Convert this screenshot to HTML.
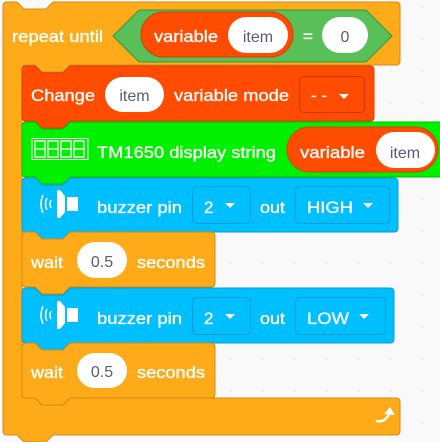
<!DOCTYPE html>
<html><head><style>
html,body{margin:0;padding:0;background:#F9F9F9;width:440px;height:442px;overflow:hidden}
svg text{font-family:"Liberation Sans",sans-serif;font-size:17px;font-weight:normal}
.w{fill:#fff;stroke:#fff;stroke-width:0.35}.g{fill:#575E75;font-size:16px}
</style></head><body>
<svg width="440" height="442" viewBox="0 0 440 442" xmlns="http://www.w3.org/2000/svg">
<defs>
<pattern id="dots" width="32" height="32" patternUnits="userSpaceOnUse" x="6" y="6"><circle cx="1" cy="1" r="0.7" fill="#ddd"/></pattern>
</defs>
<rect width="440" height="442" fill="#F9F9F9"/>
<rect width="440" height="442" fill="url(#dots)"/>
<!-- repeat C -->
<path d="M3,6 Q3,2 7,2 H17 l7,7 H46 l7,-7 H396 Q400,2 400,6 V61 Q400,65 396,65 H70 l-7,7 H42 l-7,-7 H26 Q22,65 22,69 V394 Q22,398 26,398 H35 l7,7 H63 l7,-7 H396 Q400,398 400,402 V431 Q400,435 396,435 H53 l-7,7 H24 l-7,-7 H7 Q3,435 3,431 Z" fill="#FFAB19" stroke="#CF8B17" stroke-width="1"/>
<text class="w" x="12" y="42" textLength="91" lengthAdjust="spacingAndGlyphs">repeat until</text>
<polygon points="113,36 139,10 366,10 392,36 366,62 139,62" fill="#59C059" stroke="#389438"/>
<rect x="141" y="12" width="152" height="45" rx="22.5" fill="#FF4C00" stroke="#DB3D00"/>
<text class="w" x="154" y="42" textLength="64" lengthAdjust="spacingAndGlyphs">variable</text>
<rect x="228" y="17" width="60" height="36" rx="18" fill="#fff"/>
<text class="g" x="258" y="42" text-anchor="middle">item</text>
<text class="w" x="303" y="42">=</text>
<rect x="322" y="17" width="46" height="36" rx="18" fill="#fff"/>
<text class="g" x="345" y="42" text-anchor="middle">0</text>
<path d="M376,421 q9,2 13,-7" fill="none" stroke="#fff" stroke-width="2.5"/><polygon points="384,414 390,407 395,415" fill="#fff"/>

<!-- Change -->
<path d="M22,70 Q22,66 26,66 H35 l7,7 H63 l7,-7 H370 Q374,66 374,70 V117 Q374,121 370,121 H70 l-7,7 H42 l-7,-7 H26 Q22,121 22,117 Z" fill="#FF4C00" stroke="#DB3D00"/>
<text class="w" x="31" y="101" textLength="64" lengthAdjust="spacingAndGlyphs">Change</text>
<rect x="105" y="77" width="59" height="35" rx="17.5" fill="#fff"/>
<text class="g" x="134.5" y="101" text-anchor="middle">item</text>
<text class="w" x="174" y="101" textLength="115" lengthAdjust="spacingAndGlyphs">variable mode</text>
<rect x="299.5" y="76.5" width="65" height="36" rx="4" fill="#FF4C00" stroke="#C53900"/>
<text class="w" x="311" y="101">- -</text>
<polygon points="339,94 349,94 344,99" fill="#fff"/>

<!-- Green -->
<path d="M22,126 Q22,122 26,122 H35 l7,7 H63 l7,-7 H460 V177 H70 l-7,7 H42 l-7,-7 H26 Q22,177 22,173 Z" fill="#00F000" stroke="#00C000"/>
<rect x="32" y="138.5" width="56" height="21" fill="none" stroke="#fff" stroke-width="1"/>
<g fill="none" stroke="#fff" stroke-width="1.3">
<rect x="35" y="141" width="10" height="16"/><line x1="35" y1="149" x2="45" y2="149"/>
<rect x="48" y="141" width="10" height="16"/><line x1="48" y1="149" x2="58" y2="149"/>
<rect x="61" y="141" width="10" height="16"/><line x1="61" y1="149" x2="71" y2="149"/>
<rect x="74" y="141" width="10" height="16"/><line x1="74" y1="149" x2="84" y2="149"/>
</g>
<text class="w" x="97" y="158" textLength="179" lengthAdjust="spacingAndGlyphs">TM1650 display string</text>
<rect x="287" y="127" width="151" height="45" rx="22.5" fill="#FF4C00" stroke="#DB3D00"/>
<text class="w" x="300" y="158" textLength="65" lengthAdjust="spacingAndGlyphs">variable</text>
<rect x="376" y="132" width="59" height="36" rx="18" fill="#fff"/>
<text class="g" x="405" y="158" text-anchor="middle">item</text>

<!-- Buzzer 1 -->
<path d="M22,182 Q22,178 26,178 H35 l7,7 H63 l7,-7 H394 Q398,178 398,182 V228 Q398,232 394,232 H70 l-7,7 H42 l-7,-7 H26 Q22,232 22,228 Z" fill="#00BFFF" stroke="#0A9ECF"/>
<g id="spk">
<path d="M57,190 L60,190 L65,196 L65,212 L60,218 L57,218 Z" fill="#fff"/>
<rect x="67" y="197" width="11" height="14" fill="#fff"/>
<path d="M43,195 q-4,9 0,18" fill="none" stroke="#fff" stroke-width="1.5"/>
<path d="M47,198 q-3,6 0,12" fill="none" stroke="#fff" stroke-width="1.5"/>
<path d="M51,200 q-2,4 0,8" fill="none" stroke="#fff" stroke-width="1.5"/>
</g>
<text class="w" x="97" y="213" textLength="85" lengthAdjust="spacingAndGlyphs">buzzer pin</text>
<rect x="192.5" y="186.5" width="58" height="37" rx="4" fill="#00BFFF" stroke="#0A9ECF"/>
<text class="w" x="204" y="213">2</text>
<polygon points="225,203 235,203 230,208" fill="#fff"/>
<text class="w" x="260" y="213" textLength="25" lengthAdjust="spacingAndGlyphs">out</text>
<rect x="295.5" y="186.5" width="94" height="37" rx="4" fill="#00BFFF" stroke="#0A9ECF"/>
<text class="w" x="307" y="213" textLength="46" lengthAdjust="spacingAndGlyphs">HIGH</text>
<polygon points="363,203 373,203 368,208" fill="#fff"/>

<!-- Wait 1 -->
<path d="M22,236 Q22,232 26,232 H35 l7,7 H63 l7,-7 H211 Q215,232 215,236 V283 Q215,287 211,287 H70 l-7,7 H42 l-7,-7 H26 Q22,287 22,283 Z" fill="#FFAB19" stroke="#CF8B17"/>
<text class="w" x="31" y="268" textLength="32" lengthAdjust="spacingAndGlyphs">wait</text>
<rect x="77" y="242" width="50" height="36" rx="18" fill="#fff"/>
<text class="g" x="102" y="267" text-anchor="middle">0.5</text>
<text class="w" x="137" y="268" textLength="68" lengthAdjust="spacingAndGlyphs">seconds</text>

<!-- Buzzer 2 -->
<path d="M22,292 Q22,288 26,288 H35 l7,7 H63 l7,-7 H390 Q394,288 394,292 V339 Q394,343 390,343 H70 l-7,7 H42 l-7,-7 H26 Q22,343 22,339 Z" fill="#00BFFF" stroke="#0A9ECF"/>
<use href="#spk" y="111"/>
<text class="w" x="97" y="324" textLength="85" lengthAdjust="spacingAndGlyphs">buzzer pin</text>
<rect x="192.5" y="297.5" width="58" height="37" rx="4" fill="#00BFFF" stroke="#0A9ECF"/>
<text class="w" x="204" y="324">2</text>
<polygon points="225,314 235,314 230,319" fill="#fff"/>
<text class="w" x="260" y="324" textLength="25" lengthAdjust="spacingAndGlyphs">out</text>
<rect x="295.5" y="297.5" width="90" height="37" rx="4" fill="#00BFFF" stroke="#0A9ECF"/>
<text class="w" x="307" y="324" textLength="42" lengthAdjust="spacingAndGlyphs">LOW</text>
<polygon points="359,314 369,314 364,319" fill="#fff"/>

<!-- Wait 2 -->
<path d="M22,347 Q22,343 26,343 H35 l7,7 H63 l7,-7 H211 Q215,343 215,347 V394 Q215,398 211,398 H70 l-7,7 H42 l-7,-7 H26 Q22,398 22,394 Z" fill="#FFAB19" stroke="#CF8B17"/>
<text class="w" x="31" y="378" textLength="32" lengthAdjust="spacingAndGlyphs">wait</text>
<rect x="77" y="353" width="50" height="35" rx="17.5" fill="#fff"/>
<text class="g" x="102" y="377" text-anchor="middle">0.5</text>
<text class="w" x="137" y="378" textLength="68" lengthAdjust="spacingAndGlyphs">seconds</text>
</svg>
</body></html>
